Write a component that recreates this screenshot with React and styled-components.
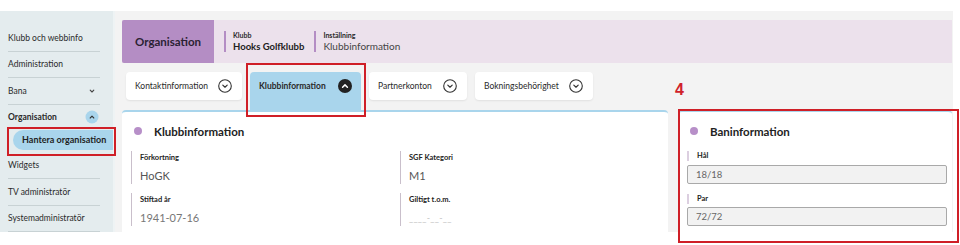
import styled, { createGlobalStyle } from 'styled-components'

const GlobalStyle = createGlobalStyle`
  html, body {
    margin: 0;
    min-height: 245px;
    background: #fff;
  }
  body {
    font-family: Lato, "Noto Sans", "Liberation Sans", sans-serif;
    color: #222;
  }
`

const navItems = [
  { label: 'Klubb och webbinfo' },
  { label: 'Administration' },
  { label: 'Bana', chevron: 'down' },
]
const navItemsAfter = ['Widgets', 'TV administratör', 'Systemadministratör']

const tabs = [
  { label: 'Kontaktinformation', width: 116 },
  { label: 'Klubbinformation', width: 111, active: true },
  { label: 'Partnerkonton', width: 98 },
  { label: 'Bokningsbehörighet', width: 118 },
]

const ChevronCircle = ({ active }) => (
  <svg width="14" height="14" viewBox="0 0 14 14">
    {active ? (
      <>
        <circle cx="7" cy="7" r="7" fill="#222" />
        <path d="M4.6 8.3 L7 5.9 L9.4 8.3" fill="none" stroke="#fff" strokeWidth="1.5" strokeLinecap="round" strokeLinejoin="round" />
      </>
    ) : (
      <>
        <circle cx="7" cy="7" r="6.3" fill="none" stroke="#333" strokeWidth="1.1" />
        <path d="M4.8 6.1 L7 8.2 L9.2 6.1" fill="none" stroke="#333" strokeWidth="1.2" strokeLinecap="round" strokeLinejoin="round" />
      </>
    )}
  </svg>
)

const SmallChevron = ({ up }) => (
  <svg width="14" height="14" viewBox="0 0 14 14">
    {up ? (
      <>
        <circle cx="7" cy="7" r="6.5" fill="#a9d5ec" />
        <path d="M5.2 8 L7 6.2 L8.8 8" fill="none" stroke="#333" strokeWidth="1.1" strokeLinecap="round" strokeLinejoin="round" />
      </>
    ) : (
      <path d="M5.2 6.2 L7 8 L8.8 6.2" fill="none" stroke="#444" strokeWidth="1.1" strokeLinecap="round" strokeLinejoin="round" />
    )}
  </svg>
)

export default function App() {
  return (
    <>
      <GlobalStyle />
      <Page>
        <Sidebar>
          {navItems.map((item) => (
            <NavItem key={item.label}>
              {item.label}
              {item.chevron && <SmallChevron />}
            </NavItem>
          ))}
          <NavItem $open>
            Organisation
            <SmallChevron up />
          </NavItem>
          <SubItemWrap>
            <SubItem>Hantera organisation</SubItem>
            <Highlight $top={-3} $left={-6} $right={-3} $bottom={-6} />
          </SubItemWrap>
          {navItemsAfter.map((label) => (
            <NavItem key={label}>{label}</NavItem>
          ))}
        </Sidebar>

        <Main>
          <Header>
            <OrgBlock>Organisation</OrgBlock>
            <Crumb>
              <CrumbLabel>Klubb</CrumbLabel>
              <CrumbValue $bold>Hooks Golfklubb</CrumbValue>
            </Crumb>
            <Crumb>
              <CrumbLabel>Inställning</CrumbLabel>
              <CrumbValue>Klubbinformation</CrumbValue>
            </Crumb>
          </Header>

          <TabRow>
            {tabs.map((tab) =>
              tab.active ? (
                <Annotated key={tab.label}>
                  <Tab $width={tab.width} $active>
                    {tab.label}
                    <ChevronCircle active />
                  </Tab>
                  <Highlight $top={-9} $left={-4} $right={-5} $bottom={-7} />
                </Annotated>
              ) : (
                <Tab key={tab.label} $width={tab.width}>
                  {tab.label}
                  <ChevronCircle />
                </Tab>
              )
            )}
          </TabRow>

          <Cards>
            <Card>
              <CardTitle>Klubbinformation</CardTitle>
              <FieldGrid>
                <Field>
                  <FieldLabel>Förkortning</FieldLabel>
                  <FieldValue>HoGK</FieldValue>
                </Field>
                <Field>
                  <FieldLabel>SGF Kategori</FieldLabel>
                  <FieldValue>M1</FieldValue>
                </Field>
                <Field>
                  <FieldLabel>Stiftad år</FieldLabel>
                  <FieldValue $muted>1941-07-16</FieldValue>
                </Field>
                <Field>
                  <FieldLabel>Giltigt t.o.m.</FieldLabel>
                  <FieldValue $placeholder>____-__-__</FieldValue>
                </Field>
              </FieldGrid>
            </Card>

            <Annotated>
              <Card $narrow>
                <CardTitle>Baninformation</CardTitle>
                <InputLabel>Hål</InputLabel>
                <ReadOnlyInput>18/18</ReadOnlyInput>
                <InputLabel $spaced>Par</InputLabel>
                <ReadOnlyInput>72/72</ReadOnlyInput>
              </Card>
              <Highlight $top={-1} $left={0} $right={-7} $bottom={-11} />
              <Marker>4</Marker>
            </Annotated>
          </Cards>
        </Main>
      </Page>
    </>
  )
}

const Page = styled.div`
  display: flex;
  margin-top: 11px;
  padding-right: 7px;
  width: 953px;
  height: 221px;
`

const Sidebar = styled.nav`
  box-sizing: border-box;
  width: 115px;
  height: 221px;
  flex-shrink: 0;
  background: #e4ecee;
  border-right: 2px solid #eef3f4;
  padding: 14px 13px 0 8px;
  display: flex;
  flex-direction: column;
`

const NavItem = styled.div`
  box-sizing: border-box;
  flex-shrink: 0;
  display: flex;
  align-items: center;
  justify-content: space-between;
  height: ${(p) => (p.$open ? '23px' : '26.5px')};
  padding-right: 1px;
  font-size: 8.5px;
  font-weight: ${(p) => (p.$open ? 700 : 400)};
  color: #2a2a2a;
  border-bottom: ${(p) => (p.$open ? 'none' : '1px solid #c8d2d4')};
  padding-top: ${(p) => (p.$open ? '1px' : '0')};
`

const Annotated = styled.div`
  position: relative;
  display: flex;
  flex-direction: column;
`

const SubItemWrap = styled(Annotated)`
  flex-shrink: 0;
  margin: 2px -13px 3px 5px;
`

const Highlight = styled.div`
  position: absolute;
  top: ${(p) => p.$top}px;
  left: ${(p) => p.$left}px;
  right: ${(p) => p.$right}px;
  bottom: ${(p) => p.$bottom}px;
  border: 2px solid #cf1f27;
  pointer-events: none;
  z-index: 5;
`

const SubItem = styled.div`
  height: 20px;
  display: flex;
  align-items: center;
  padding-left: 9px;
  background: #a9d5ec;
  border-radius: 10px 0 0 10px;
  font-size: 9px;
  font-weight: 700;
  color: #1f1f1f;
`

const Main = styled.main`
  box-sizing: border-box;
  flex: 1;
  height: 221px;
  background: #f3f3f3;
  padding: 9px 1px 0 7px;
  display: flex;
  flex-direction: column;
`

const Header = styled.header`
  display: flex;
  align-items: center;
  height: 43px;
  background: #ece1ec;
  flex-shrink: 0;
`

const OrgBlock = styled.div`
  width: 92px;
  align-self: stretch;
  display: flex;
  align-items: center;
  justify-content: center;
  background: #b48dc4;
  font-size: 11.5px;
  font-weight: 700;
  color: #2a2233;
  border-radius: 2px 0 0 2px;
`

const Crumb = styled.div`
  display: flex;
  flex-direction: column;
  justify-content: center;
  margin-left: 10px;
  padding-left: 7px;
  height: 21px;
  border-left: 2px solid #b48dc4;
`

const CrumbLabel = styled.span`
  font-size: 7px;
  font-weight: 700;
  color: #2a2a2a;
  line-height: 9px;
`

const CrumbValue = styled.span`
  font-size: ${(p) => (p.$bold ? '9.5px' : '10px')};
  font-weight: ${(p) => (p.$bold ? 700 : 400)};
  color: ${(p) => (p.$bold ? '#222' : '#444')};
  line-height: 13px;
`

const TabRow = styled.div`
  display: flex;
  align-items: flex-start;
  gap: 8px;
  margin-top: 9px;
  padding-left: 4px;
  height: 38px;
  flex-shrink: 0;
`

const Tab = styled.div`
  box-sizing: border-box;
  width: ${(p) => p.$width}px;
  height: ${(p) => (p.$active ? '38px' : '28px')};
  padding: ${(p) => (p.$active ? '0 9px 10px 9px' : '0 10px 0 9px')};
  display: flex;
  align-items: center;
  justify-content: space-between;
  background: ${(p) => (p.$active ? '#a9d5ec' : '#fff')};
  border-radius: 4px 4px ${(p) => (p.$active ? '0 0' : '4px 4px')};
  box-shadow: ${(p) => (p.$active ? 'none' : '0 1px 2px rgba(0,0,0,0.08)')};
  font-size: 8.5px;
  font-weight: ${(p) => (p.$active ? 700 : 400)};
  color: #2a2a2a;
  white-space: nowrap;
`

const Cards = styled.div`
  flex: 1;
  display: grid;
  grid-template-columns: 546px 274px;
  grid-template-rows: 100%;
  column-gap: 10px;
  min-height: 0;
`

const Card = styled.section`
  box-sizing: border-box;
  flex: 1;
  background: #fff;
  border-top: 2px solid #a9d5ec;
  border-radius: 4px 4px 0 0;
  padding: ${(p) => (p.$narrow ? '12px 5px 0 9px' : '12px 0 0 9px')};
  overflow: hidden;
  display: flex;
  flex-direction: column;
  min-height: 0;
`

const CardTitle = styled.h2`
  margin: 0 0 13px 0;
  display: flex;
  align-items: center;
  gap: 12px;
  padding-left: 1px;
  height: 14px;
  flex-shrink: 0;
  font-size: 11.5px;
  font-weight: 700;
  color: #222;

  &::before {
    content: '';
    width: 8px;
    height: 8px;
    border-radius: 50%;
    background: #b78fc8;
    margin-left: 2px;
  }
`

const FieldGrid = styled.div`
  display: grid;
  grid-template-columns: 269px 1fr;
  row-gap: 9px;
`

const Field = styled.div`
  height: 33px;
  border-left: 1.5px solid #c9bfcb;
  padding-left: 8px;
  display: flex;
  flex-direction: column;
  justify-content: space-between;
  padding-top: 2px;
  box-sizing: border-box;
`

const FieldLabel = styled.span`
  font-size: 7.5px;
  font-weight: 700;
  color: #222;
  line-height: 10px;
`

const FieldValue = styled.span`
  font-size: ${(p) => (p.$placeholder ? '9px' : '11px')};
  line-height: 16px;
  letter-spacing: ${(p) => (p.$placeholder ? '0.3px' : '0')};
  color: ${(p) => (p.$placeholder ? '#c4c4c4' : p.$muted ? '#777' : '#555')};
`

const InputLabel = styled.span`
  flex-shrink: 0;
  font-size: 7.5px;
  font-weight: 700;
  color: #222;
  line-height: 10px;
  border-left: 2px solid #dccfe0;
  padding-left: 8px;
  margin-top: ${(p) => (p.$spaced ? '10px' : '0')};
  margin-bottom: ${(p) => (p.$spaced ? '3px' : '4px')};
`

const ReadOnlyInput = styled.div`
  height: 19px;
  flex-shrink: 0;
  box-sizing: border-box;
  border: 1px solid #a9a9a9;
  border-radius: 2px;
  background: #f2f2f2;
  display: flex;
  align-items: center;
  padding-left: 8px;
  font-size: 9.5px;
  color: #666;
`

const Marker = styled.span`
  position: absolute;
  top: -28px;
  left: -3px;
  font-family: "Liberation Sans", Arial, sans-serif;
  font-size: 16px;
  line-height: 16px;
  font-weight: 700;
  color: #d0212a;
`
